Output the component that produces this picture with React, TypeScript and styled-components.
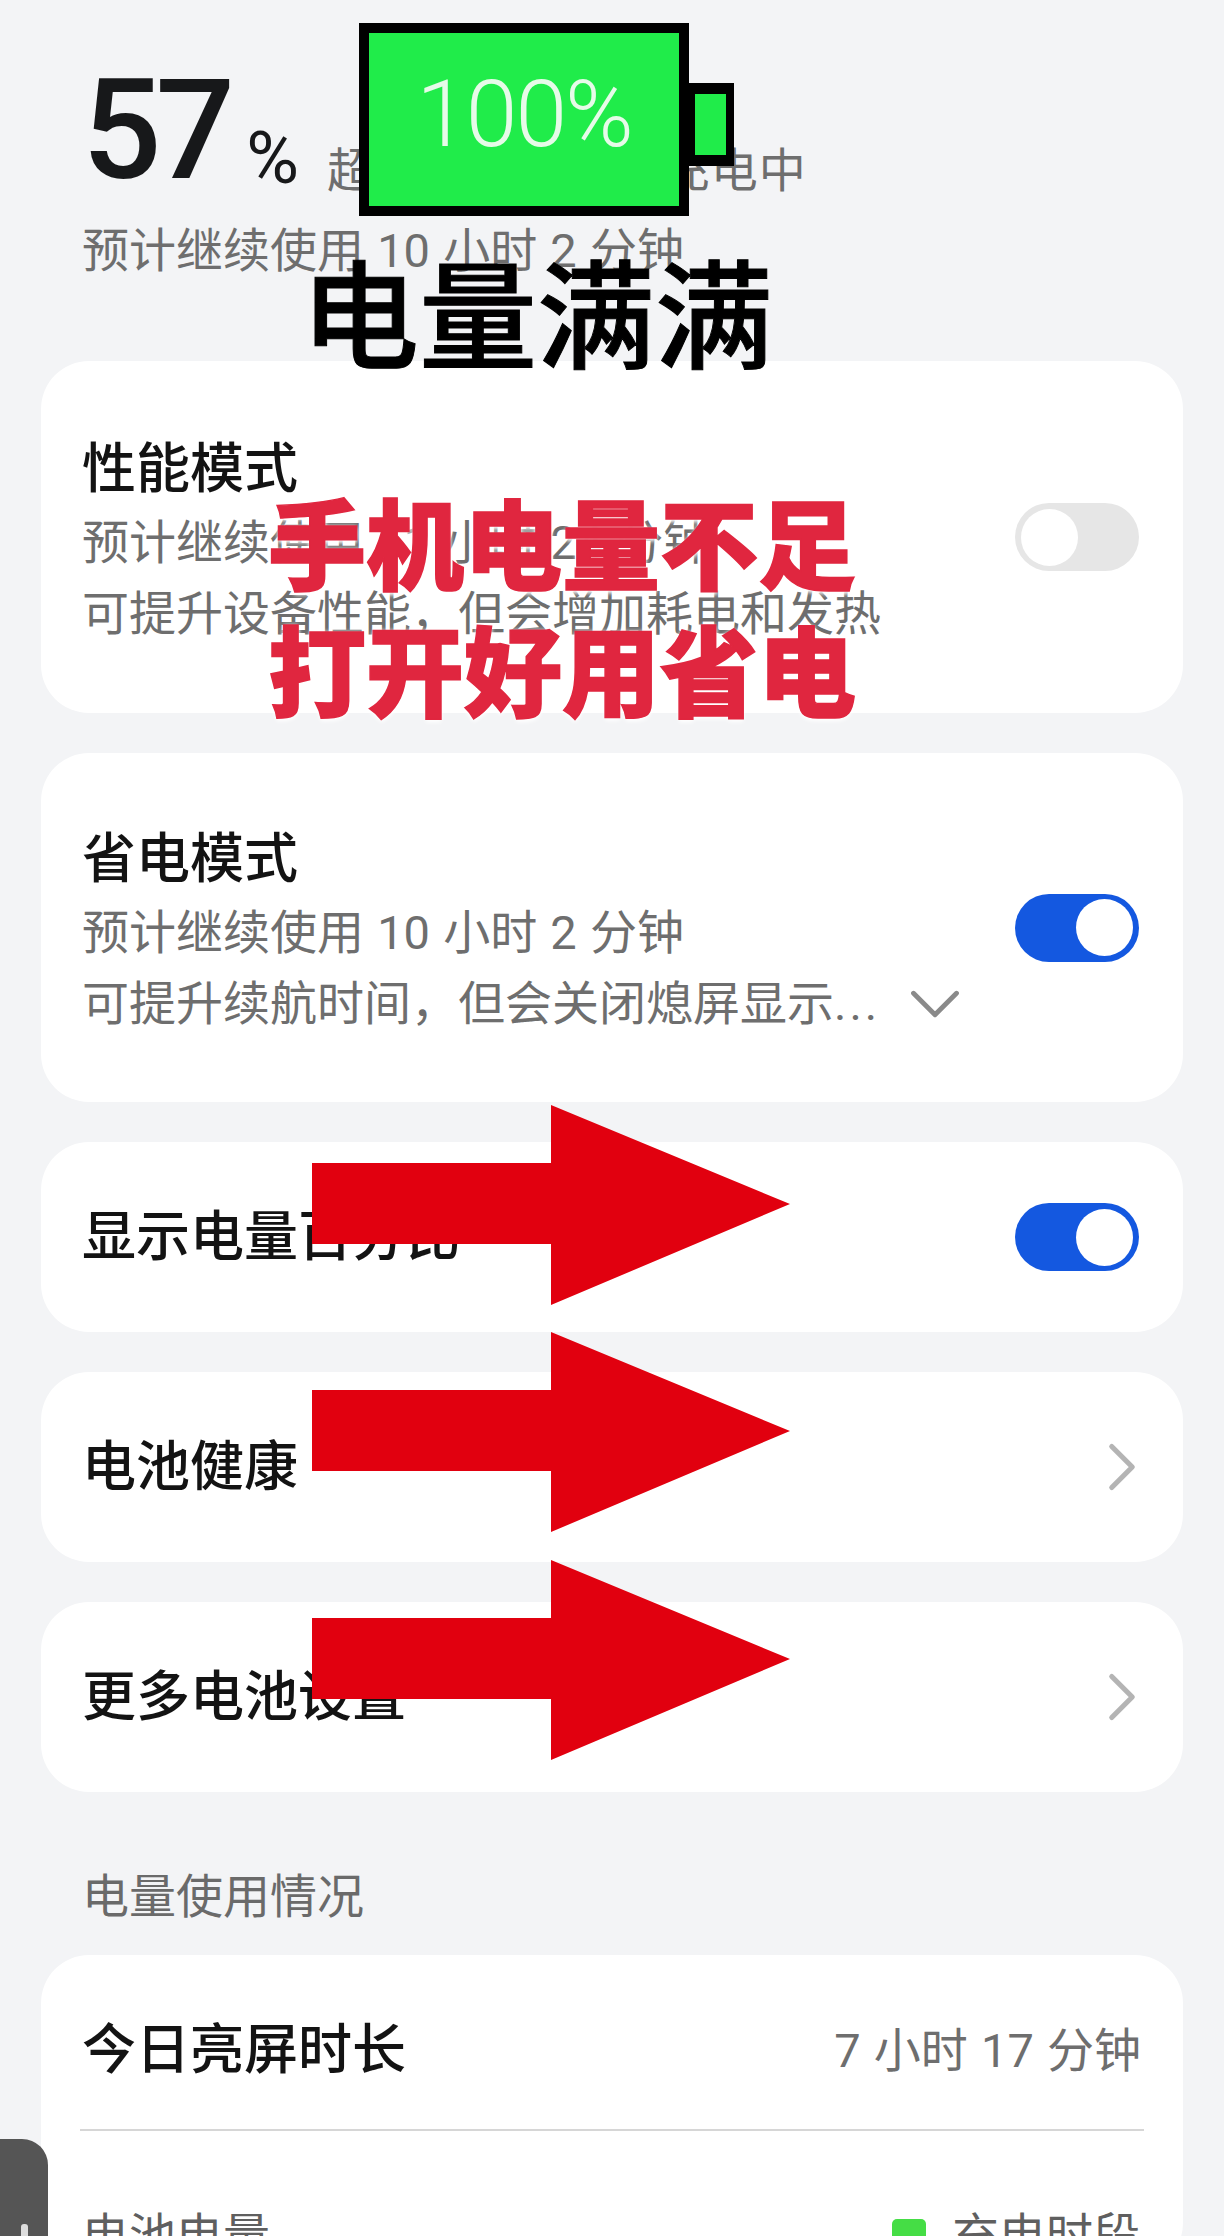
import React from "react";
import styled, { createGlobalStyle } from "styled-components";
import { ChevronDown, ChevronRight } from "lucide-react";

const cjk = `"Noto Sans CJK SC", sans-serif`;
const mixed = `Roboto, "Noto Sans CJK SC", sans-serif`;

const Global = createGlobalStyle`
  html, body { margin: 0; padding: 0; background: #f3f4f6; }
  * { box-sizing: border-box; }
`;

const Stage = styled.div`
  position: relative;
  width: 1224px;
  height: 2236px;
  overflow: hidden;
  background: #f3f4f6;
  font-family: ${mixed};
`;

const Header = styled.header`
  height: 361px;
  padding: 63px 0 0 82px;
`;

const LevelRow = styled.div`
  display: flex;
  align-items: baseline;
  height: 134px;
`;

const LevelNumber = styled.span`
  font-size: 140px;
  line-height: 134px;
  font-weight: 500;
  letter-spacing: -6px;
  color: #17181a;
`;

const LevelUnit = styled.span`
  margin-left: 17px;
  font-size: 72px;
  line-height: 1;
  color: #17181a;
  position: relative;
  top: 5px;
`;

const ChargeState = styled.span`
  margin-left: 28px;
  font-size: 47px;
  line-height: 1;
  letter-spacing: 1px;
  color: #6e6e6e;
  position: relative;
  top: 9px;
`;

const Estimate = styled.div`
  margin-top: 19px;
  font-size: 47px;
  line-height: 70px;
  word-spacing: 1.5px;
  color: #6e6e6e;
`;

const Column = styled.main`
  display: flex;
  flex-direction: column;
  gap: 40px;
  padding: 0 41px;
`;

const Card = styled.section<{ $height: number }>`
  display: flex;
  align-items: center;
  justify-content: space-between;
  height: ${(p) => p.$height}px;
  padding: 0 44px 0 41px;
  background: #fff;
  border-radius: 48px;
`;

const Info = styled.div<{ $top: number }>`
  display: flex;
  flex-direction: column;
  padding-top: ${(p) => p.$top}px;
`;

const Title = styled.div<{ $gap?: number }>`
  font-size: 54px;
  line-height: 71px;
  font-weight: 500;
  color: #131313;
  margin-bottom: ${(p) => p.$gap ?? 0}px;
`;

const Detail = styled.div`
  display: flex;
  align-items: center;
  font-size: 47px;
  line-height: 71px;
  word-spacing: 1.5px;
  color: #6e6e6e;
  white-space: nowrap;
`;

const Dots = styled.span`
  letter-spacing: 3px;
`;

const MoreIcon = styled(ChevronDown)`
  margin: -8px 0 -8px 12px;
  width: 86px;
  height: 86px;
  color: #8a8a8a;
`;

const Track = styled.div<{ $on: boolean }>`
  display: flex;
  flex: none;
  align-items: center;
  justify-content: ${(p) => (p.$on ? "flex-end" : "flex-start")};
  width: 124px;
  height: 68px;
  padding: 0 6px;
  border-radius: 34px;
  background: ${(p) => (p.$on ? "#1458e0" : "#e6e6e6")};
`;

const Knob = styled.div`
  width: 57px;
  height: 57px;
  border-radius: 50%;
  background: #fff;
`;

const NextIcon = styled(ChevronRight)`
  margin: -6px -24px -6px 0;
  width: 82px;
  height: 82px;
  color: #b4b4b4;
`;

const SectionLabel = styled.h2`
  margin: 30px 0 -17px 41px;
  font-size: 47px;
  line-height: 70px;
  font-weight: 400;
  color: #6a6a6a;
`;

const UsageCard = styled.section`
  background: #fff;
  border-radius: 48px;
  padding: 60px 39px 0;
`;

const UsageRow = styled.div`
  display: flex;
  align-items: center;
  justify-content: space-between;
  padding: 0 3px 43px 2px;
  border-bottom: 2px solid #d6d6d6;
`;

const UsageValue = styled.span`
  font-size: 47px;
  line-height: 71px;
  word-spacing: 1.5px;
  color: #6e6e6e;
`;

const ChartHead = styled.div`
  display: flex;
  align-items: center;
  justify-content: space-between;
  padding: 70px 4px 0 2px;
  font-size: 47px;
  line-height: 70px;
  color: #5f5f5f;
`;

const Legend = styled.span`
  display: flex;
  align-items: center;
  gap: 26px;
`;

const LegendSwatch = styled.i`
  width: 34px;
  height: 34px;
  border-radius: 5px;
  background: #45dd45;
`;

const Battery = styled.div`
  position: absolute;
  left: 359px;
  top: 23px;
  display: flex;
  align-items: center;
`;

const BatteryBody = styled.div`
  display: flex;
  align-items: center;
  justify-content: center;
  width: 330px;
  height: 193px;
  border: 10px solid #000;
  background: #20ec4a;
  font-family: Roboto, sans-serif;
  font-size: 93px;
  font-weight: 300;
  letter-spacing: -2px;
  color: #e6fbe8;
  padding-bottom: 10px;
`;

const BatteryTip = styled.div`
  width: 45px;
  height: 83px;
  margin-top: 9px;
  border: solid #000;
  border-width: 11px 8px 11px 6px;
  background: #20ec4a;
`;

const FullCaption = styled.div`
  position: absolute;
  left: 301px;
  top: 239px;
  font-family: ${cjk};
  font-size: 118px;
  line-height: 140px;
  font-weight: 500;
  color: #000;
  -webkit-text-stroke: 1px #000;
  white-space: nowrap;
`;

const Slogan = styled.div<{ $top: number }>`
  position: absolute;
  left: 268px;
  top: ${(p) => p.$top}px;
  font-family: ${cjk};
  font-size: 98px;
  line-height: 120px;
  font-weight: 900;
  color: #e0263f;
  -webkit-text-stroke: 1.5px #e0263f;
  text-shadow: 0 0 4px #fff, 0 3px 4px #fff;
  white-space: nowrap;
`;

const Arrow = styled.svg<{ $top: number }>`
  position: absolute;
  left: 312px;
  top: ${(p) => p.$top}px;
  width: 478px;
  height: 200px;
`;

const SideHandle = styled.div`
  position: absolute;
  left: 0;
  top: 2139px;
  display: flex;
  justify-content: center;
  width: 48px;
  height: 97px;
  padding-top: 85px;
  border-top-right-radius: 26px;
  background: #555;
`;

const HandleMark = styled.div`
  width: 7px;
  height: 12px;
  border-radius: 3px 3px 0 0;
  background: #ddd;
`;

const arrowTops = [1105, 1332, 1560];

export default function App() {
  return (
    <Stage>
      <Global />
      <Header>
        <LevelRow>
          <LevelNumber>57</LevelNumber>
          <LevelUnit>%</LevelUnit>
          <ChargeState>超级闪充　正在充电中</ChargeState>
        </LevelRow>
        <Estimate>预计继续使用 10 小时 2 分钟</Estimate>
      </Header>

      <Column>
        <Card $height={352}>
          <Info $top={9}>
            <Title $gap={2}>性能模式</Title>
            <Detail>预计继续使用 11 小时 24 分钟</Detail>
            <Detail>可提升设备性能，但会增加耗电和发热</Detail>
          </Info>
          <Track $on={false}><Knob /></Track>
        </Card>

        <Card $height={349}>
          <Info $top={8}>
            <Title $gap={2}>省电模式</Title>
            <Detail>预计继续使用 10 小时 2 分钟</Detail>
            <Detail>
              可提升续航时间，但会关闭熄屏显示<Dots>...</Dots>
              <MoreIcon strokeWidth={1.35} />
            </Detail>
          </Info>
          <Track $on><Knob /></Track>
        </Card>

        <Card $height={190}>
          <Title>显示电量百分比</Title>
          <Track $on><Knob /></Track>
        </Card>

        <Card $height={190}>
          <Title>电池健康</Title>
          <NextIcon strokeWidth={1.5} />
        </Card>

        <Card $height={190}>
          <Title>更多电池设置</Title>
          <NextIcon strokeWidth={1.5} />
        </Card>

        <SectionLabel>电量使用情况</SectionLabel>

        <UsageCard>
          <UsageRow>
            <Title>今日亮屏时长</Title>
            <UsageValue>7 小时 17 分钟</UsageValue>
          </UsageRow>
          <ChartHead>
            <span>电池电量</span>
            <Legend>
              <LegendSwatch />
              充电时段
            </Legend>
          </ChartHead>
        </UsageCard>
      </Column>

      <Battery>
        <BatteryBody>100%</BatteryBody>
        <BatteryTip />
      </Battery>
      <FullCaption>电量满满</FullCaption>
      <Slogan $top={479}>手机电量不足</Slogan>
      <Slogan $top={606}>打开好用省电</Slogan>

      {arrowTops.map((top) => (
        <Arrow key={top} $top={top} viewBox="0 0 478 200">
          <polygon points="0,58 239,58 239,0 478,99 239,200 239,139 0,139" fill="#e1000f" />
        </Arrow>
      ))}

      <SideHandle>
        <HandleMark />
      </SideHandle>
    </Stage>
  );
}
